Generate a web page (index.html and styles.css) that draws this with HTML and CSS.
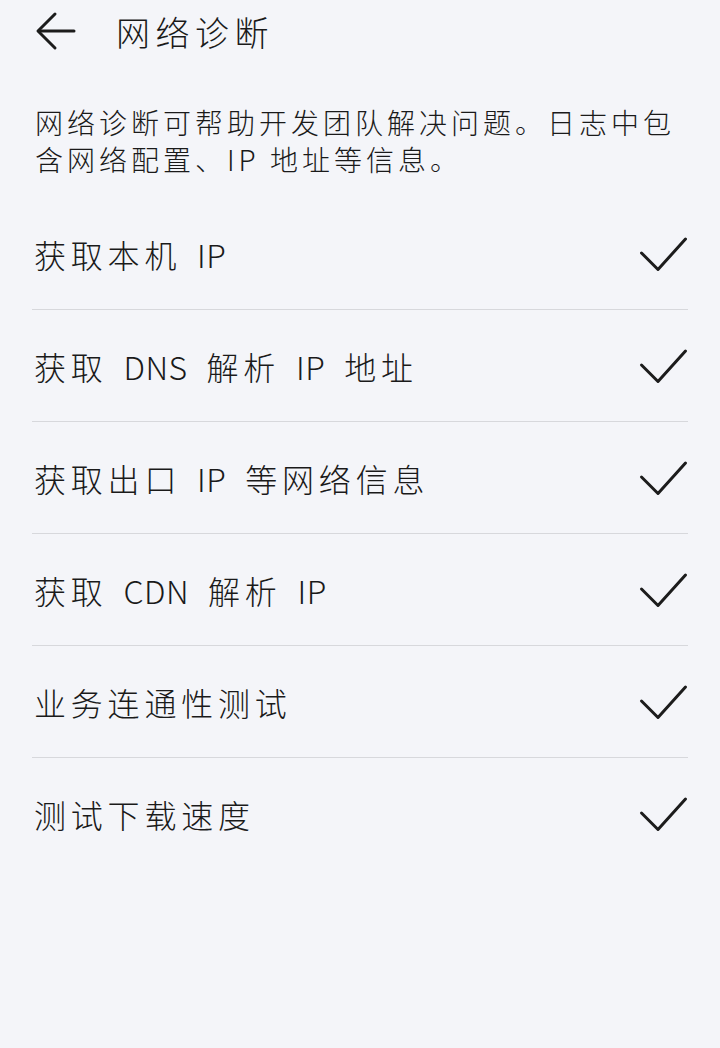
FILE: index.html
```html
<!DOCTYPE html>
<html lang="zh-CN">
<head>
    <meta charset="UTF-8">
    <meta name="viewport" content="width=device-width, initial-scale=1.0">
    <title>网络诊断</title>
    <link rel="stylesheet" href="styles.css">
</head>
<body>
    <div id="page">
        <div class="top-bar">
            <button class="back-btn" aria-label="返回">
                <svg width="44" height="44" viewBox="0 0 44 44" fill="none" stroke="#1c1c1c" stroke-width="3" stroke-linecap="round" stroke-linejoin="round">
                    <path d="M39 22H4"/>
                    <path d="M20 5L3 22l17 17"/>
                </svg>
            </button>
            <h1 class="title">网络诊断</h1>
        </div>

        <p class="intro">网络诊断可帮助开发团队解决问题。日志中包含网络配置、IP 地址等信息。</p>

        <ul class="check-list">
            <li class="check-item"><span class="label">获取本机 <span class="en">IP</span></span><span class="tick"></span></li>
            <li class="check-item"><span class="label">获取 <span class="en">DNS</span> 解析 <span class="en">IP</span> 地址</span><span class="tick"></span></li>
            <li class="check-item"><span class="label">获取出口 <span class="en">IP</span> 等网络信息</span><span class="tick"></span></li>
            <li class="check-item"><span class="label">获取 <span class="en">CDN</span> 解析 <span class="en">IP</span></span><span class="tick"></span></li>
            <li class="check-item"><span class="label">业务连通性测试</span><span class="tick"></span></li>
            <li class="check-item"><span class="label">测试下载速度</span><span class="tick"></span></li>
        </ul>
    </div>

    <script>
        // same tick icon for every row
        const tickSvg = '<svg width="50" height="38" viewBox="0 0 50 38" fill="none" stroke="#1c1c1c" stroke-width="3" stroke-linecap="round" stroke-linejoin="round"><path d="M3.5 18L20 34.5 47.5 4"/></svg>';
        document.querySelectorAll('.tick').forEach(el => {
            el.innerHTML = tickSvg;
        });
    </script>
</body>
</html>
```

FILE: styles.css
```css
body {
    margin: 0;
    background-color: #f4f5f9;
    color: #1a1a1a;
    font-family: "Noto Sans CJK SC", "Noto Sans", sans-serif;
    font-weight: 300;
}

#page {
    padding: 0 32px;
}

.top-bar {
    display: flex;
    align-items: center;
    height: 62px;
}

.back-btn {
    display: flex;
    align-items: center;
    padding: 0;
    margin-left: 3px;
    background: none;
    border: none;
    cursor: pointer;
}

.title {
    margin: 0 0 0 37px;
    font-size: 34px;
    font-weight: 300;
    letter-spacing: 5.5px;
}

.intro {
    margin: 42px 0 0 3px;
    font-size: 28px;
    line-height: 37px;
    letter-spacing: 4px;
}

.check-list {
    list-style-type: none;
    margin: 20px 0 0 0;
    padding: 0;
}

.check-item {
    display: flex;
    align-items: center;
    justify-content: space-between;
    height: 111px;
    border-bottom: 1px solid #d7d8dc;
}

.check-item:last-child {
    border-bottom: none;
}

.label {
    margin-left: 2px;
    font-size: 32px;
    letter-spacing: 4.8px;
    word-spacing: 4px;
    white-space: pre;
}

/* latin words keep tight spacing, only the gaps around them stay wide */
.en {
    letter-spacing: 0.5px;
    margin-right: 3px;
}

.tick {
    display: flex;
}
```
